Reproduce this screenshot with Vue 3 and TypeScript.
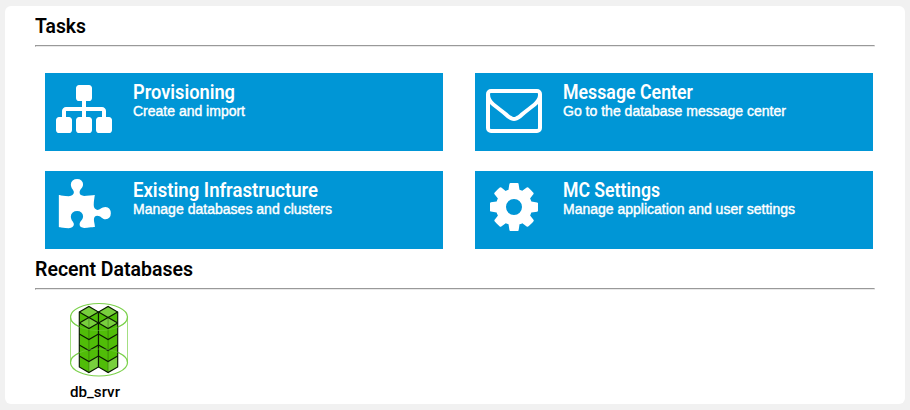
<script setup lang="ts">
interface Task {
  title: string
  titleWidth: number
  detail: string
  detailWidth: number
  icon: string
}

const tasks: Task[] = [
  {
    title: 'Provisioning',
    titleWidth: 102,
    detail: 'Create and import',
    detailWidth: 112,
    icon: 'M1792 1248v320q0 40-28 68t-68 28h-320q-40 0-68-28t-28-68v-320q0-40 28-68t68-28h96v-192h-512v192h96q40 0 68 28t28 68v320q0 40-28 68t-68 28h-320q-40 0-68-28t-28-68v-320q0-40 28-68t68-28h96v-192h-512v192h96q40 0 68 28t28 68v320q0 40-28 68t-68 28h-320q-40 0-68-28t-28-68v-320q0-40 28-68t68-28h96v-192q0-52 38-90t90-38h512v-192h-96q-40 0-68-28t-28-68v-320q0-40 28-68t68-28h320q40 0 68 28t28 68v320q0 40-28 68t-68 28h-96v192h512q52 0 90 38t38 90v192h96q40 0 68 28t28 68z',
  },
  {
    title: 'Message Center',
    titleWidth: 130,
    detail: 'Go to the database message center',
    detailWidth: 223,
    icon: 'M1664 1504v-768q-32 36-69 66-268 206-426 338-51 43-83 67t-86.500 48.500-102.500 24.500h-2q-48 0-102.500-24.500t-86.500-48.500-83-67q-158-132-426-338-37-30-69-66v768q0 13 9.500 22.500t22.500 9.500h1472q13 0 22.500-9.500t9.500-22.500zm0-1051v-24.500l-.5-13-3-12.500-5.500-9-9-7.500-14-2.500h-1472q-13 0-22.500 9.500t-9.500 22.500q0 168 147 284 193 152 401 317 6 5 35 29.500t46 37.500 44.500 31.500 50.500 27.500 43 9h2q20 0 43-9t50.500-27.500 44.500-31.500 46-37.500 35-29.500q208-165 401-317 54-43 100.500-115.500t46.500-131.500zm128-37v1088q0 66-47 113t-113 47h-1472q-66 0-113-47t-47-113v-1088q0-66 47-113t113-47h1472q66 0 113 47t47 113z',
  },
  {
    title: 'Existing Infrastructure',
    titleWidth: 185,
    detail: 'Manage databases and clusters',
    detailWidth: 199,
    icon: 'M1755 1098q0 81-44.500 135t-123.500 54q-41 0-77.500-17.500t-59-38-56.500-38-71-17.500q-110 0-110 124 0 39 16 115t15 115v5q-22 0-33 1-34 3-97.500 11.500t-115.500 13.500-98 5q-61 0-103-26.500t-42-83.500q0-37 17.500-71t38-56.500 38-59 17.500-77.500q0-79-54-123.500t-135-44.500q-84 0-143 45.500t-59 127.500q0 43 15 83t33.500 64.500 33.500 53 15 50.500q0 45-46 89-37 35-117 35-95 0-245-24-9-2-27.500-4t-27.500-4l-13-2q-1 0-3-1-2 0-2-1v-1024q2 1 17.500 3.500t34 5 21.500 3.500q150 24 245 24 80 0 117-35 46-44 46-89 0-22-15-50.500t-33.500-53-33.500-64.500-15-83q0-82 59-127.500t144-45.500q80 0 134 44.500t54 123.500q0 41-17.500 77.500t-38 59-38 56.500-17.500 71q0 57 42 83.500t103 26.500q64 0 180-15t163-17v2q-1 2-3.500 17.500t-5 34-3.500 21.500q-24 150-24 245 0 80 35 117 44 46 89 46 22 0 50.500-15t53-33.500 64.500-33.500 83-15q82 0 127.500 59t45.500 143z',
  },
  {
    title: 'MC Settings',
    titleWidth: 97,
    detail: 'Manage application and user settings',
    detailWidth: 232,
    icon: 'M1152 896q0-106-75-181t-181-75-181 75-75 181 75 181 181 75 181-75 75-181zm512-109v222q0 12-8 23t-20 13l-185 28q-19 54-39 91 35 50 107 138 10 12 10 25t-9 23q-27 37-99 108t-94 71q-12 0-26-9l-138-108q-44 23-91 38-16 136-29 186-7 28-36 28h-222q-14 0-24.500-8.500t-11.500-21.500l-28-184q-49-16-90-37l-141 107q-10 9-25 9-14 0-25-11-126-114-165-168-7-10-7-23 0-12 8-23 15-21 51-66.500t54-70.500q-27-50-41-99l-183-27q-13-2-21-12.500t-8-23.500v-222q0-12 8-23t19-13l186-28q14-46 39-92-40-57-107-138-10-12-10-24 0-10 9-23 26-36 98.500-107.500t94.500-71.500q13 0 26 10l138 107q44-23 91-38 16-136 29-186 7-28 36-28h222q14 0 24.500 8.500t11.500 21.500l28 184q49 16 90 37l142-107q9-9 24-9 13 0 25 10 129 119 165 170 7 8 7 22 0 12-8 23-15 21-51 66.500t-54 70.500q26 50 41 98l183 28q13 2 21 12.500t8 23.500z',
  },
]

const columns: number[] = [9.3, 28.5]
const layers: number[] = [0, 1, 2, 3, 4]
const layerHeight = 11
</script>

<template>
  <main class="page">
    <section class="panel">
      <h2 class="heading">
        <svg width="300" height="28"><text x="0" y="21" textLength="51" lengthAdjust="spacingAndGlyphs">Tasks</text></svg>
      </h2>
      <hr class="rule" />
      <div class="tiles">
        <a v-for="task in tasks" :key="task.title" class="tile">
          <svg class="icon" viewBox="0 0 1792 1792"><path :d="task.icon" /></svg>
          <svg class="copy" width="300" height="60">
            <text class="title" x="0" y="26" :textLength="task.titleWidth" lengthAdjust="spacingAndGlyphs">{{ task.title }}</text>
            <text class="detail" x="0" y="43" :textLength="task.detailWidth" lengthAdjust="spacingAndGlyphs">{{ task.detail }}</text>
          </svg>
        </a>
      </div>
      <h2 class="heading recent">
        <svg width="300" height="28"><text x="0" y="21" textLength="158" lengthAdjust="spacingAndGlyphs">Recent Databases</text></svg>
      </h2>
      <hr class="rule" />
      <a class="database">
        <svg class="cylinder" width="60" height="76" viewBox="0 0 60 76">
          <g class="shell">
            <ellipse cx="29" cy="15" rx="28.500" ry="13.500" />
            <ellipse cx="29" cy="60.500" rx="28.500" ry="13.500" />
            <path class="side" d="M.5 15V60.500M57.500 15V60.500" />
          </g>
          <g v-for="x in columns" :key="x" :transform="`translate(${x} 4.500)`">
            <path class="body" d="M0 5.500L9.600 0L19.200 5.500V60.500L9.600 66L0 60.500Z" />
            <path class="top" d="M0 5.500L9.600 0L19.200 5.500L9.600 11Z" />
            <path class="top" d="M0 16.500L9.600 11L19.200 16.500L9.600 22Z" />
            <path class="glow" d="M9.600 55L19.200 49.500V60.500L9.600 66Z" />
            <path class="edge faint" d="M9.600 11V66" />
            <path v-for="n in layers" :key="n" class="edge" :d="`M0 ${5.5 + n * layerHeight}L9.600 ${11 + n * layerHeight}L19.200 ${5.5 + n * layerHeight}`" />
            <path class="edge" d="M0 16.500L9.600 11L19.200 16.500" />
            <path class="edge" d="M0 5.500L9.600 0L19.200 5.500V60.500L9.600 66L0 60.500Z" />
          </g>
          <path class="front" d="M.5 15A28.500 13.500 0 0 0 57.500 15M.5 60.500A28.500 13.500 0 0 1 57.500 60.500" />
        </svg>
        <svg class="name" width="80" height="22"><text x="0" y="15" textLength="50" lengthAdjust="spacingAndGlyphs">db_srvr</text></svg>
      </a>
    </section>
  </main>
</template>

<style>
body {
  background: #f1f1f1;
}
</style>

<style scoped>
.page {
  box-sizing: border-box;
  width: 910px;
  height: 410px;
  padding: 6px 5px;
  background: #f1f1f1;
  font-family: Roboto, sans-serif;
}
.panel {
  box-sizing: border-box;
  height: 398px;
  padding: 6px 30px 0;
  border-radius: 6px;
  background: #fff;
}
svg {
  display: block;
}
.heading {
  height: 28px;
  margin: 0 0 5px;
  font-size: 21px;
  font-weight: 600;
}
.recent {
  margin-top: 6px;
}
.rule {
  height: 0;
  margin: 0;
  border: 1px solid #999;
  border-right-color: #e9e9e9;
  border-bottom-color: #e9e9e9;
}
.tiles {
  display: grid;
  grid-template-columns: 398px 398px;
  gap: 20px 32px;
  padding: 26px 10px 0;
}
.tile {
  display: flex;
  height: 78px;
  background: #0096d6;
  fill: #fff;
}
.icon {
  width: 56px;
  height: 56px;
  margin: 8px 21px 0 11px;
}
.title {
  font-size: 20.5px;
  font-weight: 600;
}
.detail {
  font: 14px "Liberation Sans", sans-serif;
  stroke: #fff;
  stroke-width: 0.4px;
}
.database {
  display: block;
  padding: 12px 0 0 35px;
}
.name {
  margin-top: 4px;
  font-size: 15px;
  font-weight: 500;
}
.cylinder {
  fill: none;
}
.shell,
.front {
  stroke: #7bd14b;
  stroke-width: 1.2;
}
.side {
  stroke-width: 0.7;
}
.front {
  opacity: 0.45;
}
.body {
  fill: #50bd08;
}
.top,
.glow {
  fill: #78cf3d;
}
.edge {
  stroke: #0a1a02;
  stroke-width: 1.15;
}
.faint {
  opacity: 0.25;
}
</style>
